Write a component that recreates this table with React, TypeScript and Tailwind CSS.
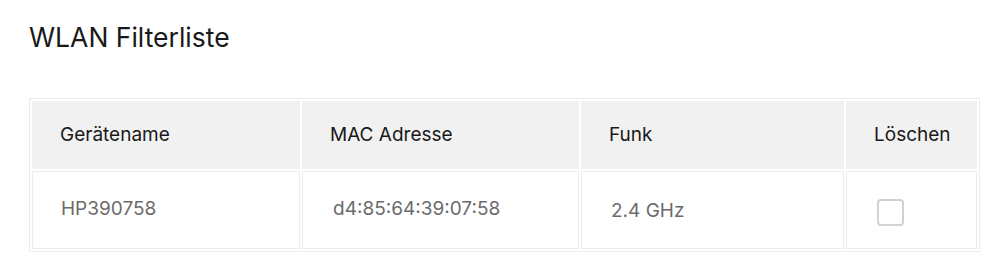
const columns = ['Gerätename', 'MAC Adresse', 'Funk', 'Löschen'];
const widths = ['w-[268px]', 'w-[277px]', 'w-[263px]', ''];

const devices = [{ name: 'HP390758', mac: 'd4:85:64:39:07:58', band: '2.4 GHz' }];

export default function App() {
  return (
    <div className="min-h-screen bg-white px-[29px] pt-[21px] font-['Inter','Noto_Sans',sans-serif] text-[#191919]">
      <h1 className="text-[26.5px] leading-[32px] font-normal">WLAN Filterliste</h1>

      <table className="mt-[45px] w-[951px] table-fixed border-separate border-spacing-[2px] border border-[#ececec] text-[19px]">
        <thead>
          <tr>
            {columns.map((col, i) => (
              <th key={col} className={`h-[68px] bg-[#f1f1f1] px-[28px] text-left font-normal ${widths[i]}`}>
                {col}
              </th>
            ))}
          </tr>
        </thead>
        <tbody>
          {devices.map((d) => (
            <tr key={d.mac} className="text-[#6b6b6b]">
              <td className="h-[78px] border border-[#ececec] px-[28px] pb-[2px]">{d.name}</td>
              <td className="border border-[#ececec] px-[30px] pb-[2px]">{d.mac}</td>
              <td className="border border-[#ececec] px-[29px] pt-[2px]">{d.band}</td>
              <td className="border border-[#ececec] px-[30px]">
                <span className="mt-[5px] block h-[27px] w-[27px] rounded-[4px] border-2 border-[#d2d2d2] bg-white" />
              </td>
            </tr>
          ))}
        </tbody>
      </table>
    </div>
  );
}
